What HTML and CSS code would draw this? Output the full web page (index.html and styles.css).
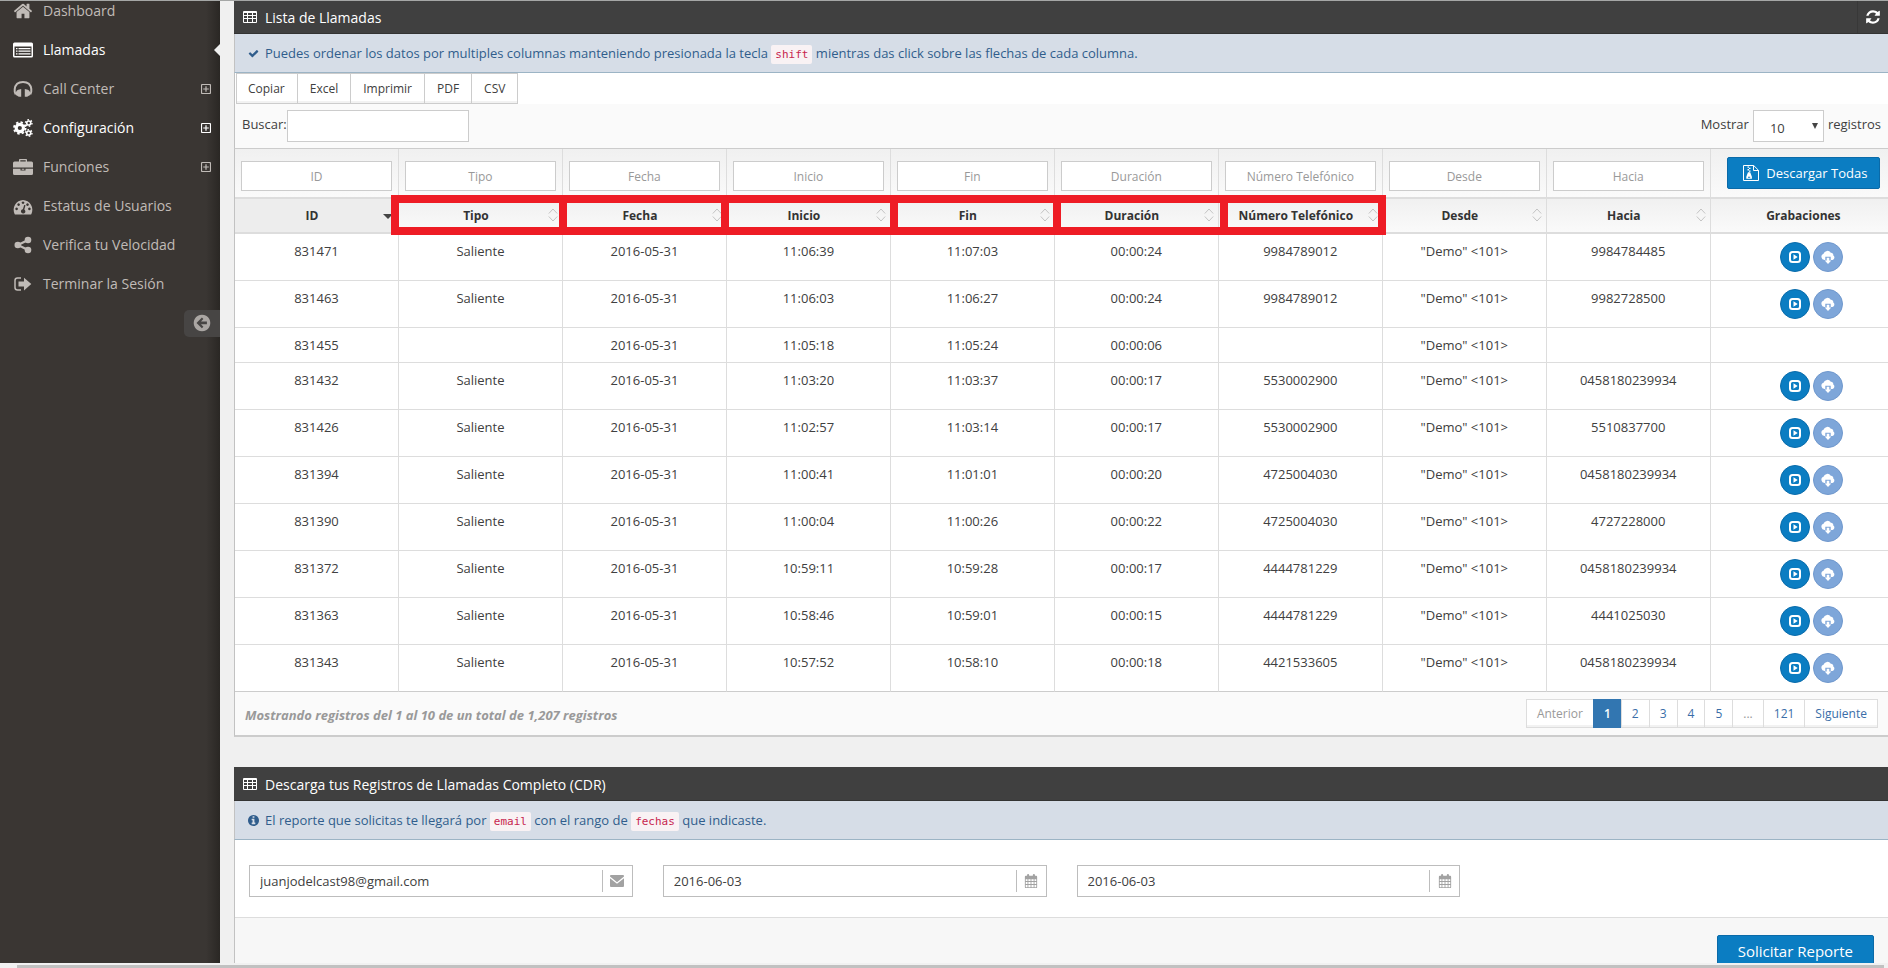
FILE: index.html
```html
<!DOCTYPE html>
<html lang="es">
<head>
<meta charset="utf-8">
<title>Lista de Llamadas</title>
<link rel="stylesheet" href="styles.css">
</head>
<body>
<svg class="sprite" aria-hidden="true">
  <symbol id="home" viewBox="0 0 1792 1792"><path d="M1472 992v480q0 26-19 45t-45 19h-384v-384h-256v384h-384q-26 0-45-19t-19-45v-480q0-1 .5-3t.5-3l575-474 575 474q1 2 1 6zm223-69l-62 74q-8 9-21 11h-3q-13 0-21-7l-692-577-692 577q-12 8-24 7-13-2-21-11l-62-74q-8-10-7-23.500t11-21.500l719-599q32-26 76-26t76 26l244 204v-195q0-14 9-23t23-9h192q14 0 23 9t9 23v408l219 182q10 8 11 21.500t-7 23.500z"/></symbol>
  <symbol id="list" viewBox="0 0 20 20"><path fill-rule="evenodd" d="M1.500 2.500h17a1.500 1.500 0 0 1 1.500 1.500v12a1.500 1.500 0 0 1-1.500 1.500h-17a1.500 1.500 0 0 1-1.500-1.500v-12a1.500 1.500 0 0 1 1.500-1.500zM1.500 6.500v9.500h17v-9.500zM3 8h1.500v1.200h-1.500zM5.500 8h12v1.200h-12zM3 10.600h1.500v1.200h-1.500zM5.500 10.600h12v1.200h-12zM3 13.200h1.500v1.200h-1.500zM5.500 13.200h12v1.200h-12z"/></symbol>
  <symbol id="phones" viewBox="0 0 20 20"><path d="M2.600 15.200C1.500 13.500 1.500 12 1.700 10.200C2.200 5.600 5.500 2.900 10 2.900s7.800 2.700 8.300 7.300c.2 1.800.2 3.300-.9 5" fill="none" stroke="currentColor" stroke-width="2"/><path d="M5.200 10.800l3-.9v7.900h-2.400l-2-1.200-1.200-.6c-.3-2.300.8-4.400 2.600-5.200zM14.800 10.800l-3-.9v7.900h2.400l2-1.200 1.200-.6c.3-2.300-.8-4.400-2.600-5.200z"/></symbol>
  <symbol id="gears" viewBox="0 0 22 22"><g fill="none" stroke="currentColor"><circle cx="7.500" cy="11" r="4" stroke-width="3.400"/><circle cx="7.500" cy="11" r="6.300" stroke-width="2.200" stroke-dasharray="2.600 2.348"/><circle cx="17.300" cy="5.500" r="2.200" stroke-width="1.800"/><circle cx="17.300" cy="5.500" r="3.600" stroke-width="1.500" stroke-dasharray="1.700 2.070"/><circle cx="17.300" cy="16.500" r="2.200" stroke-width="1.800"/><circle cx="17.300" cy="16.500" r="3.600" stroke-width="1.500" stroke-dasharray="1.700 2.070"/></g></symbol>
  <symbol id="case" viewBox="0 0 20 20"><path fill-rule="evenodd" d="M6 4.500v-1.700q0-.8.800-.8h6.400q.8 0 .8.800v1.700h4.500q1.500 0 1.500 1.500v4.500h-20v-4.500q0-1.500 1.500-1.500zM7.300 4.500h5.400v-1.200h-5.400zM0 11.700h7.500v1.800h5v-1.800h7.500v4.800q0 1.500-1.500 1.500h-17q-1.500 0-1.500-1.500zM8.700 11.700h2.600v1h-2.600z"/></symbol>
  <symbol id="gauge" viewBox="0 0 20 20"><path fill-rule="evenodd" d="M10 4a9.800 9.800 0 0 1 8.400 14q-.3.500-.9.500h-15q-.6 0-.9-.5a9.800 9.800 0 0 1 8.400-14zM3.600 11.600a1.300 1.300 0 1 0 .01 0zM5.600 7.300a1.300 1.300 0 1 0 .01 0zM10 5.400a1.300 1.300 0 1 0 .01 0zM14.500 7.300a1.300 1.300 0 1 0 .01 0zM16.400 11.600a1.300 1.300 0 1 0 .01 0zM11.200 8.900l-1.300 4.300a2.200 2.200 0 1 0 1.400.3l1.200-4.300z"/></symbol>
  <symbol id="share" viewBox="0 0 20 20"><path d="M15 5L5 10l10 5" fill="none" stroke="currentColor" stroke-width="2.200"/><circle cx="15" cy="5" r="3.300"/><circle cx="4.800" cy="10" r="3.300"/><circle cx="15" cy="15" r="3.300"/></symbol>
  <symbol id="exit" viewBox="0 0 20 20"><path d="M8 4H4.500a2.500 2.500 0 0 0-2.500 2.500v7a2.500 2.500 0 0 0 2.500 2.500H8" fill="none" stroke="currentColor" stroke-width="1.500"/><path d="M5.500 7.500h5.500V3.700L18.300 10 11 16.500V12.600H5.500z"/></symbol>
  <symbol id="plus" viewBox="0 0 10 10"><path d="M1.500.5h7q1 0 1 1v7q0 1-1 1h-7q-1 0-1-1v-7q0-1 1-1zM5 2.200v5.600M2.200 5h5.600" fill="none" stroke="currentColor" stroke-width="1.200"/></symbol>
  <symbol id="back" viewBox="0 0 18 18"><path fill-rule="evenodd" d="M9 .7a8.300 8.300 0 1 0 .01 0zM8.900 3.600l1.500 1.500-2.400 2.500h5.900v2.600h-5.900l2.400 2.500-1.500 1.500-5.400-5.300z"/></symbol>
  <symbol id="table" viewBox="0 0 14 12"><path fill-rule="evenodd" d="M1 0h12q1 0 1 1v10q0 1-1 1h-12q-1 0-1-1v-10q0-1 1-1zM1 2v2h3v-2zM5 2v2h4v-2zM10 2v2h3v-2zM1 5v2h3v-2zM5 5v2h4v-2zM10 5v2h3v-2zM1 8v3h3v-3zM5 8v3h4v-3zM10 8v3h3v-3z"/></symbol>
  <symbol id="refresh" viewBox="0 0 1792 1792"><path d="M1639 1056q0 5-1 7-64 268-268 434.500t-478 166.500q-146 0-282.500-55t-243.500-157l-129 129q-19 19-45 19t-45-19-19-45v-448q0-26 19-45t45-19h448q26 0 45 19t19 45-19 45l-137 137q71 66 161 102t187 36q134 0 250-65t186-179q11-17 53-117 8-23 30-23h192q13 0 22.500 9.500t9.500 22.500zm25-800v448q0 26-19 45t-45 19h-448q-26 0-45-19t-19-45 19-45l138-138q-148-137-349-137-134 0-250 65t-186 179q-11 17-53 117-8 23-30 23h-199q-13 0-22.500-9.500t-9.500-22.500v-7q65-268 270-434.500t480-166.500q146 0 284 55.500t245 156.500l130-129q19-19 45-19t45 19 19 45z"/></symbol>
  <symbol id="check" viewBox="0 0 1792 1792"><path d="M1671 566q0 40-28 68l-724 724-136 136q-28 28-68 28t-68-28l-136-136-362-362q-28-28-28-68t28-68l136-136q28-28 68-28t68 28l294 295 656-657q28-28 68-28t68 28l136 136q28 28 28 68z"/></symbol>
  <symbol id="info" viewBox="128 128 1536 1536"><path d="M1152 1376v-160q0-14-9-23t-23-9h-96v-512q0-14-9-23t-23-9h-320q-14 0-23 9t-9 23v160q0 14 9 23t23 9h96v320h-96q-14 0-23 9t-9 23v160q0 14 9 23t23 9h448q14 0 23-9t9-23zm-128-896v-160q0-14-9-23t-23-9h-192q-14 0-23 9t-9 23v160q0 14 9 23t23 9h192q14 0 23-9t9-23zm640 416q0 209-103 385.500t-279.500 279.500-385.500 103-385.500-103-279.500-279.500-103-385.500 103-385.500 279.500-279.500 385.500-103 385.500 103 279.500 279.500 103 385.500z"/></symbol>
  <symbol id="zip" viewBox="0 0 16 16"><path d="M.5.500h10.200l4.800 4.800v10.200H.5zM10.500.500v5h5" fill="none" stroke="currentColor"/><path d="M4.500 1.500h1.500v1.300h-1.500zM6 2.800h1.500v1.300h-1.500zM4.500 4.100h1.500v1.300h-1.500zM6 5.400h1.500v1.300h-1.500z"/><path fill-rule="evenodd" d="M5 7.300h2.200l1.700 4.500v1.900h-5.600v-1.900zM5 11.700v1h2.200v-1z"/></symbol>
  <symbol id="sort" viewBox="0 0 10 14"><path d="M.8 5.500L5 1l4.200 4.500M.8 8.500L5 13l4.200-4.500" fill="none" stroke="currentColor"/></symbol>
  <symbol id="play" viewBox="0 0 12 12"><rect x="1" y="1" width="10" height="10" rx="2.500" fill="none" stroke="currentColor" stroke-width="2"/><path d="M4.500 3.300L8.700 6 4.500 8.700z"/></symbol>
  <symbol id="cloud" viewBox="0 0 14 14"><path fill-rule="evenodd" d="M4.300 10H3.500a3.200 3.200 0 0 1-1-6.200A4 4 0 0 1 9.800 2.800a2.300 2.300 0 0 1 2.500 2.700A2.500 2.500 0 0 1 11.500 10H9.700V6.700H4.300z"/><path d="M5.700 7.700h2.600v2.800h2L7 14l-3.300-3.500h2z"/></symbol>
  <symbol id="mail" viewBox="0 0 14 12"><path d="M1 0h12q1 0 1 1v.6L7 7.200 0 1.600V1q0-1 1-1zM0 3.200l7 5.500 7-5.500V11q0 1-1 1H1q-1 0-1-1z"/></symbol>
  <symbol id="calendar" viewBox="0 0 14 16"><path fill-rule="evenodd" d="M1 2h1.500V1q0-1 1.200-1t1.200 1v1h4.200V1q0-1 1.200-1t1.200 1v1H13q1 0 1 1v12q0 1-1 1H1q-1 0-1-1V3q0-1 1-1zM1 6v2h2v-2zM4 6v2h2.500v-2zM7.500 6v2H10v-2zM11 6v2h2v-2zM1 9v2.500h2V9zM4 9v2.500h2.500V9zM7.500 9v2.500H10V9zM11 9v2.500h2V9zM1 12.500V15h2v-2.500zM4 12.500V15h2.500v-2.500zM7.500 12.500V15H10v-2.500zM11 12.500V15h2v-2.500z"/></symbol>
</svg>

<div class="app">
  <div class="viewport">
    <aside class="sidebar">
      <nav class="menu">
        <a href="#"><svg><use href="#home"/></svg><span>Dashboard</span></a>
        <a href="#" class="active current"><svg><use href="#list"/></svg><span>Llamadas</span></a>
        <a href="#"><svg><use href="#phones"/></svg><span>Call Center</span><svg class="expand"><use href="#plus"/></svg></a>
        <a href="#" class="active"><svg><use href="#gears"/></svg><span>Configuración</span><svg class="expand"><use href="#plus"/></svg></a>
        <a href="#"><svg><use href="#case"/></svg><span>Funciones</span><svg class="expand"><use href="#plus"/></svg></a>
        <a href="#"><svg><use href="#gauge"/></svg><span>Estatus de Usuarios</span></a>
        <a href="#"><svg><use href="#share"/></svg><span>Verifica tu Velocidad</span></a>
        <a href="#"><svg><use href="#exit"/></svg><span>Terminar la Sesión</span></a>
      </nav>
      <button class="minify" aria-label="Minimizar menú"><svg><use href="#back"/></svg></button>
    </aside>

    <main class="content">
      <section class="panel">
        <header class="panel-head"><svg class="head-icon"><use href="#table"/></svg><h2>Lista de Llamadas</h2><button class="reload" aria-label="Recargar"><svg><use href="#refresh"/></svg></button></header>
        <p class="note"><svg><use href="#check"/></svg><span>Puedes ordenar los datos por multiples columnas manteniendo presionada la tecla <code>shift</code> mientras das click sobre las flechas de cada columna.</span></p>
        <div class="exports"><button>Copiar</button><button>Excel</button><button>Imprimir</button><button>PDF</button><button>CSV</button></div>
        <div class="toolbar">
          <label for="search">Buscar:</label><input id="search" type="text">
          <div class="length"><label for="length">Mostrar</label><span class="select"><select id="length"><option>10</option></select></span><span class="unit">registros</span></div>
        </div>
        <div class="table-wrap">
          <table>
            <colgroup><col class="data" span="9"><col></colgroup>
            <thead>
              <tr class="filters">
                <td><input type="text" placeholder="ID" aria-label="ID"></td>
                <td><input type="text" placeholder="Tipo" aria-label="Tipo"></td>
                <td><input type="text" placeholder="Fecha" aria-label="Fecha"></td>
                <td><input type="text" placeholder="Inicio" aria-label="Inicio"></td>
                <td><input type="text" placeholder="Fin" aria-label="Fin"></td>
                <td><input type="text" placeholder="Duración" aria-label="Duración"></td>
                <td><input type="text" placeholder="Número Telefónico" aria-label="Número Telefónico"></td>
                <td><input type="text" placeholder="Desde" aria-label="Desde"></td>
                <td><input type="text" placeholder="Hacia" aria-label="Hacia"></td>
                <td class="last"><button class="download-all"><svg><use href="#zip"/></svg>Descargar Todas</button></td>
              </tr>
              <tr class="titles">
                <th class="sorted">ID</th>
                <th>Tipo<svg><use href="#sort"/></svg></th>
                <th>Fecha<svg><use href="#sort"/></svg></th>
                <th>Inicio<svg><use href="#sort"/></svg></th>
                <th>Fin<svg><use href="#sort"/></svg></th>
                <th>Duración<svg><use href="#sort"/></svg></th>
                <th>Número Telefónico<svg><use href="#sort"/></svg></th>
                <th>Desde<svg><use href="#sort"/></svg></th>
                <th>Hacia<svg><use href="#sort"/></svg></th>
                <th class="last">Grabaciones</th>
              </tr>
            </thead>
            <tbody>
              <tr><td>831471</td><td>Saliente</td><td>2016-05-31</td><td>11:06:39</td><td>11:07:03</td><td>00:00:24</td><td>9984789012</td><td>"Demo" &lt;101&gt;</td><td>9984784485</td><td class="actions"><div><button class="play" aria-label="Reproducir"><svg><use href="#play"/></svg></button><button class="save" aria-label="Descargar"><svg><use href="#cloud"/></svg></button></div></td></tr>
              <tr><td>831463</td><td>Saliente</td><td>2016-05-31</td><td>11:06:03</td><td>11:06:27</td><td>00:00:24</td><td>9984789012</td><td>"Demo" &lt;101&gt;</td><td>9982728500</td><td class="actions"><div><button class="play" aria-label="Reproducir"><svg><use href="#play"/></svg></button><button class="save" aria-label="Descargar"><svg><use href="#cloud"/></svg></button></div></td></tr>
              <tr><td>831455</td><td></td><td>2016-05-31</td><td>11:05:18</td><td>11:05:24</td><td>00:00:06</td><td></td><td>"Demo" &lt;101&gt;</td><td></td><td></td></tr>
              <tr><td>831432</td><td>Saliente</td><td>2016-05-31</td><td>11:03:20</td><td>11:03:37</td><td>00:00:17</td><td>5530002900</td><td>"Demo" &lt;101&gt;</td><td>0458180239934</td><td class="actions"><div><button class="play" aria-label="Reproducir"><svg><use href="#play"/></svg></button><button class="save" aria-label="Descargar"><svg><use href="#cloud"/></svg></button></div></td></tr>
              <tr><td>831426</td><td>Saliente</td><td>2016-05-31</td><td>11:02:57</td><td>11:03:14</td><td>00:00:17</td><td>5530002900</td><td>"Demo" &lt;101&gt;</td><td>5510837700</td><td class="actions"><div><button class="play" aria-label="Reproducir"><svg><use href="#play"/></svg></button><button class="save" aria-label="Descargar"><svg><use href="#cloud"/></svg></button></div></td></tr>
              <tr><td>831394</td><td>Saliente</td><td>2016-05-31</td><td>11:00:41</td><td>11:01:01</td><td>00:00:20</td><td>4725004030</td><td>"Demo" &lt;101&gt;</td><td>0458180239934</td><td class="actions"><div><button class="play" aria-label="Reproducir"><svg><use href="#play"/></svg></button><button class="save" aria-label="Descargar"><svg><use href="#cloud"/></svg></button></div></td></tr>
              <tr><td>831390</td><td>Saliente</td><td>2016-05-31</td><td>11:00:04</td><td>11:00:26</td><td>00:00:22</td><td>4725004030</td><td>"Demo" &lt;101&gt;</td><td>4727228000</td><td class="actions"><div><button class="play" aria-label="Reproducir"><svg><use href="#play"/></svg></button><button class="save" aria-label="Descargar"><svg><use href="#cloud"/></svg></button></div></td></tr>
              <tr><td>831372</td><td>Saliente</td><td>2016-05-31</td><td>10:59:11</td><td>10:59:28</td><td>00:00:17</td><td>4444781229</td><td>"Demo" &lt;101&gt;</td><td>0458180239934</td><td class="actions"><div><button class="play" aria-label="Reproducir"><svg><use href="#play"/></svg></button><button class="save" aria-label="Descargar"><svg><use href="#cloud"/></svg></button></div></td></tr>
              <tr><td>831363</td><td>Saliente</td><td>2016-05-31</td><td>10:58:46</td><td>10:59:01</td><td>00:00:15</td><td>4444781229</td><td>"Demo" &lt;101&gt;</td><td>4441025030</td><td class="actions"><div><button class="play" aria-label="Reproducir"><svg><use href="#play"/></svg></button><button class="save" aria-label="Descargar"><svg><use href="#cloud"/></svg></button></div></td></tr>
              <tr><td>831343</td><td>Saliente</td><td>2016-05-31</td><td>10:57:52</td><td>10:58:10</td><td>00:00:18</td><td>4421533605</td><td>"Demo" &lt;101&gt;</td><td>0458180239934</td><td class="actions"><div><button class="play" aria-label="Reproducir"><svg><use href="#play"/></svg></button><button class="save" aria-label="Descargar"><svg><use href="#cloud"/></svg></button></div></td></tr>
            </tbody>
          </table>
          <div class="marks" aria-hidden="true"><i></i><i></i><i></i><i></i><i></i><i></i></div>
        </div>
        <footer class="table-foot">
          <em>Mostrando registros del 1 al 10 de un total de 1,207 registros</em>
          <nav class="pages"><a href="#" class="off">Anterior</a><a href="#" class="on">1</a><a href="#">2</a><a href="#">3</a><a href="#">4</a><a href="#">5</a><a href="#" class="off">...</a><a href="#">121</a><a href="#">Siguiente</a></nav>
        </footer>
      </section>

      <section class="panel">
        <header class="panel-head"><svg class="head-icon"><use href="#table"/></svg><h2>Descarga tus Registros de Llamadas Completo (CDR)</h2></header>
        <p class="note"><svg><use href="#info"/></svg><span>El reporte que solicitas te llegará por <code>email</code> con el rango de <code>fechas</code> que indicaste.</span></p>
        <form>
          <div class="fields">
            <label class="field"><input type="text" value="juanjodelcast98@gmail.com" aria-label="Email"><span><svg><use href="#mail"/></svg></span></label>
            <label class="field"><input type="text" value="2016-06-03" aria-label="Fecha inicial"><span><svg><use href="#calendar"/></svg></span></label>
            <label class="field"><input type="text" value="2016-06-03" aria-label="Fecha final"><span><svg><use href="#calendar"/></svg></span></label>
          </div>
          <footer class="form-foot"><button type="button">Solicitar Reporte</button></footer>
        </form>
      </section>
    </main>
  </div>
  <div class="scroll"><div class="thumb"></div></div>
</div>
</body>
</html>
```

FILE: styles.css
```css
* { box-sizing: border-box; }
body { margin: 0; font: 13px/18px "Open Sans", sans-serif; color: #404040; }
svg { fill: currentColor; flex: none; }
button, input, select { font: inherit; color: inherit; margin: 0; border-radius: 0; }
button { cursor: pointer; }
a { text-decoration: none; }
.sprite { display: none; }

.app { display: flex; flex-direction: column; height: 100vh; border-top: 1px solid #a5a7a6; }
.viewport { display: flex; flex: 1; min-height: 0; overflow: hidden; background: #f0f0f0; }

.sidebar { width: 220px; flex: none; background: linear-gradient(to left, #2a2724, #3a3633 14px); }
.menu { margin-top: -10px; }
.menu a { position: relative; display: flex; align-items: center; gap: 10px; height: 39px; padding: 0 9px 0 13px; color: #c0bbb7; font-size: 14px; }
.menu svg { width: 20px; height: 20px; }
.menu .expand { width: 10px; height: 10px; margin-left: auto; }
.menu .active { color: #fff; }
.current::after { content: ""; position: absolute; right: 0; top: 14px; border: 6px solid transparent; border-left: 0; border-right-color: #f0f0f0; }
.minify { display: flex; align-items: center; justify-content: center; width: 36px; height: 27px; margin: 7px 0 0 auto; padding: 0 0 1px; border: 0; border-radius: 5px 0 0 5px; background: #474544; color: #aaa6a3; }
.minify svg { width: 18px; height: 18px; }

.content { flex: 1; min-width: 0; margin-top: -1px; padding-left: 14px; }
.panel { margin-bottom: 30px; }
.panel > :not(.panel-head) { border-left: 1px solid #c2c2c2; }
.panel-head { display: flex; align-items: center; height: 34px; padding: 1px 0 0 9px; background: #404040; border-bottom: 1px solid #333; color: #fff; }
.panel-head h2 { margin: 0 0 0 8px; padding-top: 1px; font-size: 14px; font-weight: 400; }
.head-icon { width: 14px; height: 12px; }
.reload { display: flex; align-items: center; margin-left: auto; height: 32px; padding: 0 7px; border: 0; border-left: 1px solid #383838; background: none; }
.reload svg { width: 16px; height: 16px; }

.note { display: flex; align-items: center; gap: 5px; height: 39px; margin: 0; padding-left: 12px; background: #d6dde7; border-bottom: 1px solid #9cb4c5; color: #305d8c; }
.note svg { width: 13px; height: 11px; }
.note code { padding: 3px 4px; border-radius: 2px; background: #f9f2f4; color: #c7254e; font: 11px "DejaVu Sans Mono", monospace; }

.exports { display: flex; height: 31px; padding-left: 1px; background: #fff; }
.exports button { height: 31px; padding: 0 12px; border: 1px solid #ccc; background: #fff; box-shadow: inset 0 -2px #f2f2f2; font-size: 12px; }
.exports button + button { margin-left: -1px; }
.exports button:first-child { padding-left: 11px; }
.toolbar { display: flex; align-items: center; height: 45px; padding: 0 7px; background: #fafafa; border-bottom: 1px solid #ccc; }
.toolbar label, .unit { padding-bottom: 4px; }
.toolbar input { width: 182px; height: 32px; border: 1px solid #ccc; background: #fff; }
.length { display: flex; align-items: center; gap: 4px; margin-left: auto; }
.select { position: relative; }
.select::after { content: ""; position: absolute; right: 6px; top: 13px; border: 3px solid transparent; border-top: 6px solid #444; border-bottom: 0; pointer-events: none; }
.select select { display: block; width: 71px; height: 32px; padding: 4px 18px 0 16px; border: 1px solid #ccc; background: #fff; appearance: none; }

.table-wrap { position: relative; }
table { width: 100%; table-layout: fixed; border-collapse: separate; border-spacing: 0; text-align: center; background: #fff; }
.data { width: 9.92%; }
td, th { border-right: 1px solid #ddd; }
td:last-child, th:last-child { border-right: 0; }
.filters td { height: 50px; padding: 6px 6px 0; background: linear-gradient(#f0f0f0, #fafafa); border-bottom: 2px solid #ddd; }
.filters input { display: block; width: 100%; height: 30px; padding: 0 8px; border: 1px solid #ccc; background: #fff; text-align: center; font-size: 12px; }
.filters input::placeholder { color: #999; }
.filters .last { padding: 0 8px 1px 16px; }
.download-all { display: flex; align-items: center; justify-content: center; gap: 7px; width: 100%; height: 32px; padding: 0 0 0 4px; border: 1px solid #0a6aa8; border-radius: 2px; background: #0b7dc2; color: #fff; }
.download-all svg { width: 16px; height: 16px; }
th { position: relative; height: 35px; padding: 0 18px 0 9px; background: linear-gradient(#f0f0f0, #fafafa); border-bottom: 2px solid #ddd; font-size: 12px; white-space: nowrap; color: #333; }
th svg { position: absolute; right: 4px; top: 9px; width: 10px; height: 14px; color: #c4c4c4; }
th.sorted { background: #ededed; }
.sorted::after { content: ""; position: absolute; right: 5px; top: 15px; border: 5px solid transparent; border-top-color: #444; border-bottom: 0; }
th.last { padding: 0 0 0 8px; }
tbody td { padding: 8px; border-bottom: 1px solid #ddd; vertical-align: top; }
tbody tr:last-child td { border-bottom-color: #ccc; }
.actions div { display: flex; justify-content: center; gap: 3px; padding-left: 24px; }
.actions button { display: flex; align-items: center; justify-content: center; width: 30px; height: 30px; padding: 0; border: 1px solid #0a6cab; border-radius: 50%; background: #0b7dc2; color: #fff; }
.actions .save { border-color: #7098cd; background: #7ea6d9; }
.actions svg { width: 12px; height: 12px; }
.actions .save svg { width: 14px; height: 14px; }
.marks { position: absolute; left: 9.46%; top: 46px; width: 60.2%; height: 40px; display: grid; grid-template-columns: 160fr 154fr 161fr 155fr 159fr 151fr; gap: 8px; padding: 8px; pointer-events: none; }
.marks i { box-shadow: 0 0 0 8px #ee1c25; }

.table-foot { display: flex; align-items: center; justify-content: space-between; height: 45px; padding: 2px 10px 0; background: #fafafa; border-bottom: 2px solid #ccc; }
.table-foot em { font-weight: 700; color: #999; }
.pages { display: flex; margin-bottom: 2px; font-size: 12px; }
.pages a { height: 29px; margin-left: -1px; padding: 5px 10px; border: 1px solid #ddd; background: #fff; box-shadow: inset 0 -2px #f2f2f2; color: #3a6ea8; }
.pages .off { color: #999; }
.pages .on { border-color: #3276b1; background: #3276b1; box-shadow: none; color: #fff; font-weight: 600; }

.fields { display: grid; grid-template-columns: repeat(4, 1fr); gap: 30px; padding: 25px 14px 20px; background: #fff; border-bottom: 1px solid #ddd; }
.field { display: flex; align-items: center; height: 32px; border: 1px solid #bdbdbd; background: #fff; }
.field input { flex: 1; min-width: 0; padding: 0 10px; border: 0; background: none; outline: 0; }
.field span { display: flex; align-items: center; justify-content: center; width: 30px; height: 22px; border-left: 1px solid #bdbdbd; color: #a2a2a2; }
.field svg { width: 14px; height: 14px; }
.form-foot { display: flex; justify-content: flex-end; padding: 17px 14px; background: #f7f7f7; }
.form-foot button { height: 32px; padding: 0 20px; border: 1px solid #0a6aa8; border-radius: 2px; background: #0b7dc2; color: #fff; font-size: 15px; }

.scroll { flex: none; height: 5px; padding: 2px 4px 0 17px; background: #f1f1f1; }
.thumb { height: 3px; background: #c1c1c1; }
```
